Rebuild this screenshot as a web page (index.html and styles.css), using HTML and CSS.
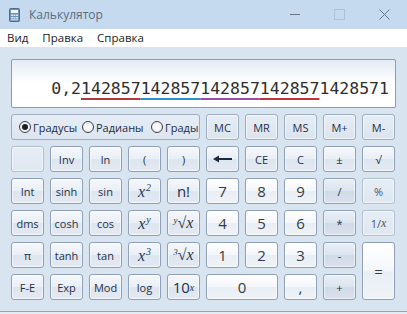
FILE: index.html
```html
<!DOCTYPE html>
<html lang="ru">
<head>
    <meta charset="UTF-8">
    <meta name="viewport" content="width=device-width, initial-scale=1.0">
    <title>Калькулятор</title>
    <link rel="stylesheet" href="styles.css">
</head>
<body>
    <div class="window">
        <div class="titlebar">
            <!-- app icon -->
            <svg class="app-icon" width="11" height="14" viewBox="0 0 11 14">
                <rect x="0.5" y="0.5" width="10" height="13" rx="1" fill="#6f8fb5" stroke="#4d6c92"/>
                <rect x="2" y="2" width="7" height="3" fill="#eef4fb"/>
                <rect x="2" y="6.5" width="2" height="1.5" fill="#dbe6f3"/>
                <rect x="4.5" y="6.5" width="2" height="1.5" fill="#dbe6f3"/>
                <rect x="7" y="6.5" width="2" height="1.5" fill="#dbe6f3"/>
                <rect x="2" y="9" width="2" height="1.5" fill="#dbe6f3"/>
                <rect x="4.5" y="9" width="2" height="1.5" fill="#dbe6f3"/>
                <rect x="7" y="9" width="2" height="1.5" fill="#dbe6f3"/>
                <rect x="2" y="11.3" width="7" height="1" fill="#dbe6f3"/>
            </svg>
            <span class="title">Калькулятор</span>
            <div class="controls">
                <span class="ctl"><span class="min"></span></span>
                <span class="ctl"><span class="max"></span></span>
                <span class="ctl">
                    <svg width="11" height="11" viewBox="0 0 11 11">
                        <path d="M0.5 0.5 L10.5 10.5 M10.5 0.5 L0.5 10.5" stroke="#6a7585" stroke-width="1"/>
                    </svg>
                </span>
            </div>
        </div>

        <div class="menubar">
            <span>Вид</span>
            <span>Правка</span>
            <span>Справка</span>
        </div>

        <div class="main">
            <div class="display">0,2<span class="u red">142857</span><span class="u blue">142857</span><span class="u purple">142857</span><span class="u red2">142857</span>1428571</div>

            <div class="keys">
                <div class="angle">
                    <label class="radio r1"><span class="dot on"></span>Градусы</label>
                    <label class="radio r2"><span class="dot"></span>Радианы</label>
                    <label class="radio"><span class="dot"></span>Грады</label>
                </div>
                <button class="key mem">MC</button>
                <button class="key mem">MR</button>
                <button class="key mem">MS</button>
                <button class="key mem">M+</button>
                <button class="key mem">M-</button>

                <button class="key dim"></button>
                <button class="key">Inv</button>
                <button class="key">ln</button>
                <button class="key">(</button>
                <button class="key">)</button>
                <button class="key">
                    <svg width="19" height="8" viewBox="0 0 19 8">
                        <path d="M0 4 L6 0.5 L6 7.5 Z" fill="#1c2a3d"/>
                        <rect x="5" y="3" width="14" height="2" fill="#1c2a3d"/>
                    </svg>
                </button>
                <button class="key">CE</button>
                <button class="key">C</button>
                <button class="key">±</button>
                <button class="key">√</button>

                <button class="key">Int</button>
                <button class="key">sinh</button>
                <button class="key">sin</button>
                <button class="key"><span class="math">x<sup>2</sup></span></button>
                <button class="key big">n!</button>
                <button class="key num">7</button>
                <button class="key num">8</button>
                <button class="key num">9</button>
                <button class="key op">/</button>
                <button class="key dim">%</button>

                <button class="key">dms</button>
                <button class="key">cosh</button>
                <button class="key">cos</button>
                <button class="key"><span class="math">x<sup>y</sup></span></button>
                <button class="key"><span class="math"><sup class="idx">y</sup>√x</span></button>
                <button class="key num">4</button>
                <button class="key num">5</button>
                <button class="key num">6</button>
                <button class="key op">*</button>
                <button class="key dim">1/<span class="mx">x</span></button>

                <button class="key">π</button>
                <button class="key">tanh</button>
                <button class="key">tan</button>
                <button class="key"><span class="math">x<sup>3</sup></span></button>
                <button class="key"><span class="math"><sup class="idx">3</sup>√x</span></button>
                <button class="key num">1</button>
                <button class="key num">2</button>
                <button class="key num">3</button>
                <button class="key op">-</button>
                <button class="key num equals">=</button>

                <button class="key">F-E</button>
                <button class="key">Exp</button>
                <button class="key">Mod</button>
                <button class="key">log</button>
                <button class="key big">10<sup class="mx">x</sup></button>
                <button class="key num zero">0</button>
                <button class="key num">,</button>
                <button class="key op">+</button>
            </div>
        </div>
        <div class="status"></div>
    </div>
</body>
</html>
```

FILE: styles.css
```css
body {
    margin: 0;
    font-family: "Open Sans", Arial, sans-serif;
    background: #d9e4f1;
}
.window {
    width: 407px;
    height: 314px;
    display: flex;
    flex-direction: column;
    overflow: hidden;
}
.titlebar {
    height: 29px;
    background: #c5d9ef;
    display: flex;
    align-items: center;
    padding-left: 9px;
}
.app-icon {
    margin-right: 9px;
}
.title {
    font-size: 12px;
    color: #5d6b7d;
}
.controls {
    margin-left: auto;
    display: flex;
    height: 100%;
}
.ctl {
    width: 45px;
    display: flex;
    align-items: center;
    justify-content: center;
}
.min {
    width: 10px;
    height: 1px;
    background: #6a7585;
}
.max {
    width: 9px;
    height: 9px;
    border: 1px solid #aec2da;
}
.menubar {
    height: 18px;
    background: #fff;
    display: flex;
    gap: 14px;
    padding-left: 7px;
    font-size: 11.5px;
    line-height: 18px;
    color: #222;
}
.main {
    flex: 1;
    padding: 12px 11px 0;
}
.status {
    height: 2px;
    border-top: 1px solid #98a1ad;
    background: #e6ebf1;
}
.display {
    height: 49px;
    box-sizing: border-box;
    border: 1px solid #8f9cae;
    border-radius: 2px;
    background: linear-gradient(#e4ebf5, #ffffff 50%);
    margin-bottom: 6px;
    padding: 19px 6px 0 0;
    text-align: right;
    font-family: "DejaVu Sans Mono", "Liberation Mono", monospace;
    font-size: 16.5px;
    line-height: 20px;
    color: #2e2e2e;
}
.u {
    text-decoration: underline;
    text-decoration-thickness: 2px;
    text-underline-offset: 4px;
}
.red { text-decoration-color: #b3393d; }
.blue { text-decoration-color: #2b94c6; }
.purple { text-decoration-color: #9a4ca6; }
.red2 { text-decoration-color: #c0353d; }

.keys {
    display: grid;
    grid-template-columns: repeat(10, 33px);
    grid-auto-rows: 26px;
    gap: 6px;
}
.angle {
    grid-column: span 5;
    box-sizing: border-box;
    border: 1px solid #9eadc2;
    border-radius: 3px;
    background: linear-gradient(#e6edf6, #dce5f0);
    display: flex;
    align-items: center;
    padding-left: 7px;
    font-size: 11px;
    color: #1d2c42;
}
.radio {
    display: flex;
    align-items: center;
    gap: 2px;
}
.r1 { width: 63px; }
.r2 { width: 69px; }
.dot {
    width: 12px;
    height: 12px;
    box-sizing: border-box;
    border: 1px solid #3c3f44;
    border-radius: 50%;
    background: radial-gradient(#ffffff, #e3e7ec);
    display: flex;
    align-items: center;
    justify-content: center;
}
.dot.on::after {
    content: "";
    width: 6px;
    height: 6px;
    border-radius: 50%;
    background: #1e1f22;
}
.key {
    box-sizing: border-box;
    padding: 0;
    border: 1px solid #8e9fb7;
    border-radius: 3px;
    background: linear-gradient(#f5f8fc, #e9eff6 48%, #dde5ef 52%, #e4eaf3);
    box-shadow: inset 0 0 0 1px rgba(255, 255, 255, 0.55);
    font-family: "Open Sans", Arial, sans-serif;
    font-size: 11px;
    color: #1f3049;
    display: flex;
    align-items: center;
    justify-content: center;
}
.key.mem {
    background: linear-gradient(#e6edf5, #dbe4ef);
    border-color: #9dadc2;
}
.key.num {
    background: linear-gradient(#ffffff, #f4f7fb 48%, #e9eef5 52%, #eff3f8);
    font-size: 15px;
    color: #353b44;
}
.key.op {
    background: linear-gradient(#e8eef5, #dce5ef 48%, #d1dbe7 52%, #d8e1ec);
}
.key.dim {
    background: linear-gradient(#e6edf5, #dfe7f1);
    border-color: #b2bfd0;
    color: #44546b;
}
.key.big {
    font-size: 15px;
}
.equals {
    grid-row: span 2;
    font-size: 24px;
}
.zero {
    grid-column: span 2;
}
.math {
    font-family: "Liberation Serif", serif;
    font-style: italic;
    font-size: 16px;
    color: #2a3547;
}
.math sup {
    font-size: 10px;
    vertical-align: 6px;
    margin-left: 1px;
}
.math .idx {
    margin: 0;
    font-size: 9px;
    vertical-align: 5px;
}
.mx {
    font-family: "Liberation Serif", serif;
    font-style: italic;
}
.key.big sup {
    font-size: 10px;
    vertical-align: 6px;
}
.key.dim .mx {
    font-size: 12px;
}
```
